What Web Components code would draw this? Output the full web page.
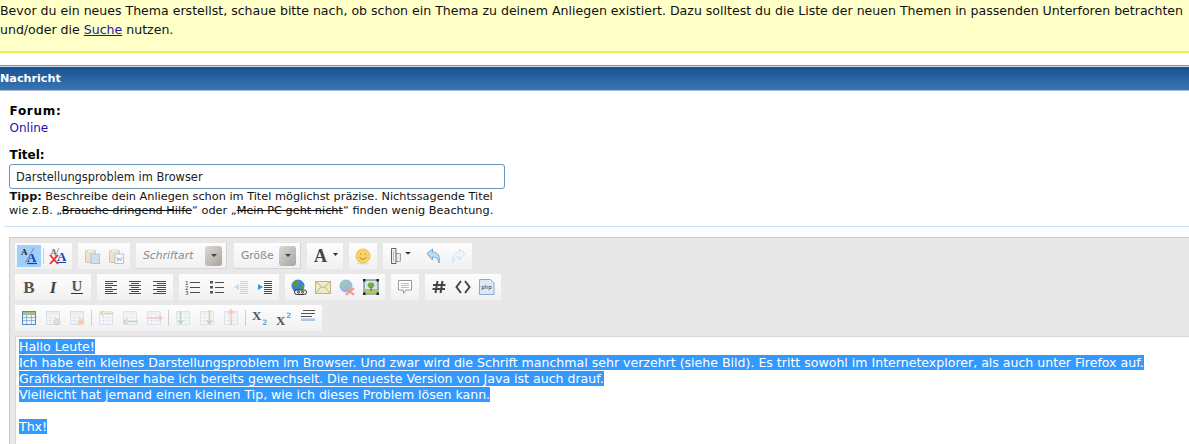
<!DOCTYPE html>
<html lang="de"><head><meta charset="utf-8"><title>Nachricht</title>
<style>
html,body{margin:0;padding:0;background:#fff;overflow:hidden}
body{font:11.5px "DejaVu Sans",Verdana,sans-serif;color:#000;width:1189px;height:444px}
</style></head><body>
<x-notice>Bevor du ein neues Thema erstellst, schaue bitte nach, ob schon ein Thema zu deinem Anliegen existiert. Dazu solltest du die Liste der neuen Themen in passenden Unterforen betrachten<br>und/oder die <a href="#" style="color:#1a1aa6">Suche</a> nutzen.</x-notice>
<x-section-head>Nachricht</x-section-head>
<x-field label="Forum:" style="margin-top:12px"><span style="color:#2a0fa8">Online</span></x-field>
<x-title-field value="Darstellungsproblem im Browser"></x-title-field>
<x-rule></x-rule>
<x-editor>
  <x-tb-row>
    <x-tb-group><x-tb-btn icon="aa" on></x-tb-btn><x-tb-sep></x-tb-sep><x-tb-btn icon="aax"></x-tb-btn></x-tb-group>
    <x-tb-group><x-tb-btn icon="paste" dim></x-tb-btn><x-tb-btn icon="pasteword" dim></x-tb-btn></x-tb-group>
    <x-combo w="91" style="margin-right:1px">Schriftart</x-combo>
    <x-combo w="67">Größe</x-combo>
    <x-tb-group><x-tb-btn icon="color" w="32"></x-tb-btn></x-tb-group>
    <x-tb-group><x-tb-btn icon="smile"></x-tb-btn></x-tb-group>
    <x-tb-group><x-tb-btn icon="mug" w="37"></x-tb-btn><x-tb-btn icon="undo"></x-tb-btn><x-tb-btn icon="redo"></x-tb-btn></x-tb-group>
  </x-tb-row>
  <x-tb-row>
    <x-tb-group><x-tb-btn icon="b"></x-tb-btn><x-tb-btn icon="i"></x-tb-btn><x-tb-btn icon="u"></x-tb-btn></x-tb-group>
    <x-tb-group><x-tb-btn icon="al"></x-tb-btn><x-tb-btn icon="ac"></x-tb-btn><x-tb-btn icon="ar"></x-tb-btn></x-tb-group>
    <x-tb-group><x-tb-btn icon="ol"></x-tb-btn><x-tb-btn icon="ul"></x-tb-btn><x-tb-btn icon="outdent" dim></x-tb-btn><x-tb-btn icon="indent"></x-tb-btn></x-tb-group>
    <x-tb-group><x-tb-btn icon="link"></x-tb-btn><x-tb-btn icon="mail"></x-tb-btn><x-tb-btn icon="unlink" dim></x-tb-btn><x-tb-btn icon="image"></x-tb-btn></x-tb-group>
    <x-tb-group><x-tb-btn icon="quote"></x-tb-btn></x-tb-group>
    <x-tb-group><x-tb-btn icon="hash"></x-tb-btn><x-tb-btn icon="code"></x-tb-btn><x-tb-btn icon="php"></x-tb-btn></x-tb-group>
  </x-tb-row>
  <x-tb-row>
    <x-tb-group>
      <x-tb-btn icon="table"></x-tb-btn><x-tb-btn icon="tprops" dim></x-tb-btn><x-tb-btn icon="tdel" dim></x-tb-btn><x-tb-sep></x-tb-sep>
      <x-tb-btn icon="r1" dim></x-tb-btn><x-tb-btn icon="r2" dim></x-tb-btn><x-tb-btn icon="r3" dim></x-tb-btn><x-tb-sep></x-tb-sep>
      <x-tb-btn icon="c1" dim></x-tb-btn><x-tb-btn icon="c2" dim></x-tb-btn><x-tb-btn icon="c3" dim></x-tb-btn><x-tb-sep></x-tb-sep>
      <x-tb-btn icon="sub"></x-tb-btn><x-tb-btn icon="sup"></x-tb-btn><x-tb-btn icon="hr"></x-tb-btn>
    </x-tb-group>
  </x-tb-row>
  <x-edit-area>
    <span>Hallo Leute!</span><br>
    <span>Ich habe ein kleines Darstellungsproblem im Browser. Und zwar wird die Schrift manchmal sehr verzehrt (siehe Bild). Es tritt sowohl im Internetexplorer, als auch unter Firefox auf.</span><br>
    <span>Grafikkartentreiber habe ich bereits gewechselt. Die neueste Version von Java ist auch drauf.</span><br>
    <span>Vielleicht hat jemand einen kleinen Tip, wie ich dieses Problem lösen kann.</span><br>
    <br>
    <span>Thx!</span>
  </x-edit-area>
</x-editor>
<script>
function def(name, html, extra){
  customElements.define(name, class extends HTMLElement{
    constructor(){super();this.attachShadow({mode:'open'}).innerHTML=html;}
    connectedCallback(){extra&&extra.call(this);}
  });
}
def('x-notice',`<style>:host{display:block;box-sizing:border-box;height:53px;background:#ffffc8;border-bottom:2px solid #eeee55;line-height:19px;color:#111;font-size:12.55px;padding-top:.5px}</style><slot></slot>`);
def('x-section-head',`<style>:host{display:block;box-sizing:border-box;margin-top:12px;height:26px;border-top:1px solid #7f93b5;border-bottom:1px solid #a9b9da;box-shadow:inset 0 1px 0 #d5dbe6;background:linear-gradient(#15528f,#3a74b4);color:#fff;font-weight:bold;font-size:11.2px;line-height:26px}</style><slot></slot>`);
def('x-field',`<style>:host{display:block;padding-left:9.5px;line-height:17px;font-size:12px}b{display:block;letter-spacing:.7px}</style><b></b><slot></slot>`,function(){this.shadowRoot.querySelector('b').textContent=this.getAttribute('label')});
def('x-title-field',`<style>:host{display:block;padding-left:9px;margin-top:11px}
b{display:block;font-size:12px;line-height:15px;padding-left:.5px}
.i{box-sizing:border-box;width:496px;height:25px;border:1px solid #6c93b8;border-radius:3px;margin-top:1px;padding-left:6px;line-height:24px;font-size:11.4px;color:#222}
p{margin:0;font-size:11.3px;line-height:14px;width:500px;color:#111}
s{text-decoration:line-through}</style>
<b>Titel:</b><div class="i"></div>
<p><b style="display:inline;font-size:11.3px">Tipp:</b> Beschreibe dein Anliegen schon im Titel möglichst präzise. Nichtssagende Titel<br>wie z.B. „<s>Brauche dringend Hilfe</s>“ oder „<s>Mein PC geht nicht</s>“ finden wenig Beachtung.</p>`,function(){this.shadowRoot.querySelector('.i').textContent=this.getAttribute('value')});
def('x-rule',`<style>:host{display:block;height:1px;background:#cfe0ee;margin:8px 0 10px 4px}</style>`);
def('x-editor',`<style>:host{display:block;box-sizing:border-box;margin-left:9px;height:220px;border:1px solid #ccc;border-right:0;background:#e8e8e8;padding:5px 0 0 5px}</style><slot></slot>`);
def('x-tb-row',`<style>:host{display:flex;gap:6px;height:26px;margin-bottom:5px}</style><slot></slot>`);
def('x-tb-group',`<style>:host{display:flex;align-items:center;padding:2px;background:linear-gradient(#fdfdfd,#f1f1f1);box-sizing:border-box;height:26px}</style><slot></slot>`);
def('x-tb-sep',`<style>:host{display:block;width:1px;height:16px;background:#cfcfcf;margin:0 2px}</style>`);
def('x-combo',`<style>:host{display:flex;box-sizing:border-box;height:26px;background:linear-gradient(#fdfdfd,#f1f1f1);border-right:1px solid #d5d5d5;border-bottom:1px solid #d5d5d5;align-items:center;justify-content:space-between;padding:0 4px 0 7px;font:italic 10.8px "DejaVu Sans",sans-serif;color:#8a8a8a}
i{display:flex;flex:none;align-items:center;justify-content:center;width:17px;height:20px;border-radius:3px;background:linear-gradient(135deg,#dcd8d4,#a8a4a0)}
i::after{content:"";width:0;height:0;border:3.5px solid transparent;border-top:3px solid #444;border-bottom:0}</style><span><slot></slot></span><i></i>`,function(){this.style.width=this.getAttribute('w')+'px';if(this.textContent.startsWith('Gr'))this.style.fontStyle='normal';});

const L='#4a4a4a';
const bars=(ys,x1s,x2s,c=L)=>ys.map((y,i)=>`<path d="M${x1s[i%x1s.length]} ${y}.5H${x2s[i%x2s.length]}" stroke="${c}"/>`).join('');
const tbl=(c='#5f86c0',fill='#eef3fb',head='#9fc28f')=>`<rect x="1.5" y="1.5" width="13" height="13" fill="${fill}" stroke="${c}"/><rect x="2" y="2" width="12" height="3" fill="${head}"/><path d="M2 7.5H14M2 10.5H14M5.5 5V14M10.5 5V14" stroke="${c}" stroke-opacity=".55"/>`;
const P=['#c4d2e4','#f6f8fb','#e4ecdc'];
const globe=`<circle cx="7" cy="7" r="6.5" fill="#3f7fd4"/><path d="M3 2.500c2-1.500 5-1.500 6 0-1 2-2 2-2 4s-2 2-3 1-2-2-1-5zM10 6c2-.5 3 0 3 2s-2 3-3 3-1-3 0-5z" fill="#4f9f4f"/>`;
const ICONS={
aa:`<text x="0" y="7" font-family="Liberation Serif" font-weight="bold" font-size="9" fill="#222">A</text><path d="M13 0 4 15" stroke="#8a8a8a"/><text x="6" y="14" font-family="Liberation Serif" font-weight="bold" font-size="13" fill="#1a3fb0">A</text><path d="M6 15.500H16" stroke="#1a3fb0" stroke-width="1.200"/>`,
aax:`<text x="0" y="8" font-family="Liberation Serif" font-weight="bold" font-size="10" fill="#777">A</text><path d="M9 0 3 14" stroke="#aaa"/><text x="7" y="13" font-family="Liberation Serif" font-weight="bold" font-size="13" fill="#1a3fb0">A</text><path d="M7 14.500H16" stroke="#1a3fb0"/><path d="M0 7 8 16M8 7 0 16" stroke="#e83030" stroke-width="1.800"/>`,
paste:`<rect x="1.500" y="2.500" width="10" height="12" rx="1" fill="#e8c8a0" stroke="#b09070"/><rect x="4" y="1" width="5" height="3" fill="#ddd"/><rect x="7" y="6" width="8.500" height="9.500" fill="#a8cce8" stroke="#6898c0"/>`,
pasteword:`<rect x="1.500" y="2.500" width="10" height="12" rx="1" fill="#e8c8a0" stroke="#b09070"/><rect x="4" y="1" width="5" height="3" fill="#ddd"/><rect x="7" y="6" width="8.500" height="9.500" fill="#fff" stroke="#8090b0"/><path d="M9 9l1 4 1.500-3 1 3 1.500-4" fill="none" stroke="#5070c0"/>`,
color:`<text x="0" y="14" font-family="Liberation Serif" font-weight="bold" font-size="18" fill="#444">A</text><path d="M19 5h5l-2.500 3z" fill="#333"/>`,
smile:`<ellipse cx="8" cy="15.500" rx="6" ry="1" fill="#ddd"/><circle cx="8" cy="8" r="7" fill="#f8d468" stroke="#eec050"/><path d="M4.500 9.500Q8 13 11.500 9.500" fill="none" stroke="#b8862a"/><circle cx="5.500" cy="6" r=".8" fill="#c89a30"/><circle cx="10.500" cy="6" r=".8" fill="#c89a30"/>`,
mug:`<path d="M5.500 5.500h5v8h-5z" fill="#e4e8ec" stroke="#9aa"/><path d="M1.500 .5h4.500v15H1.500z" fill="#eee" stroke="#666"/><path d="M3.500 3v10" stroke="#bbb"/><path d="M15 4h6l-3 2.500z" fill="#333"/>`,
undo:`<path d="M1 5.500 6.500 1v3c5 0 8 4 6.500 11-1-4-3-6-6.500-6v3z" fill="#bcdcf4" stroke="#6aa8dc"/>`,
redo:`<path d="M15 5.500 9.500 1v3c-5 0-8 4-6.500 11 1-4 3-6 6.500-6v3z" fill="#eef5fb" stroke="#cfe2f2"/>`,
b:`<text x="8" y="14" text-anchor="middle" font-family="Liberation Serif" font-weight="bold" font-size="17" fill="#555">B</text>`,
i:`<text x="8" y="14" text-anchor="middle" font-family="Liberation Serif" font-weight="bold" font-style="italic" font-size="17" fill="#444">I</text>`,
u:`<text x="8" y="12" text-anchor="middle" font-family="Liberation Serif" font-weight="bold" font-size="15" fill="#555">U</text><path d="M2 14.500H14" stroke="#333"/>`,
al:bars([2,4,6,8,10,12,14],[2],[14,10,14,9,14,10,14]),
ac:bars([2,4,6,8,10,12,14],[2,4],[14,12]),
ar:bars([2,4,6,8,10,12,14],[2,6],[15]),
ol:`<text x="0" y="6" font-family="DejaVu Sans" font-size="5.500" fill="#333">1</text><text x="0" y="11" font-family="DejaVu Sans" font-size="5.500" fill="#333">2</text><text x="0" y="16" font-family="DejaVu Sans" font-size="5.500" fill="#333">3</text>`+bars([3,8,13],[5],[15]),
ul:`<rect x="1" y="2" width="3" height="2.500" fill="#556"/><rect x="1" y="7" width="3" height="2.500" fill="#556"/><rect x="1" y="12" width="3" height="2.500" fill="#556"/>`+bars([3,8,13],[6],[15]),
outdent:bars([2,4,6,8,10,12,14],[7],[15],'#aaa')+`<path d="M1 8l5-3v6z" fill="#8cc4ee"/>`,
indent:bars([2,4,6,8,10,12,14],[7],[15])+`<path d="M6 8 1 5v6z" fill="#3a9ad8"/>`,
link:globe+`<rect x="3.500" y="11" width="12" height="4.500" rx="2.200" fill="#eee" stroke="#333"/><circle cx="7.500" cy="13.200" r="1" fill="none" stroke="#333"/><circle cx="11.500" cy="13.200" r="1" fill="none" stroke="#333"/>`,
mail:`<rect x=".5" y="2.500" width="15" height="12" fill="#efecc0" stroke="#b8b48c"/><path d="M1 3 8 9l7-6M1 14l5-6M15 14l-5-6" fill="none" stroke="#b8b48c"/>`,
unlink:globe+`<path d="M7 9l8 7M15 9l-8 7" stroke="#e84040" stroke-width="2.200"/>`,
image:`<rect x="1" y="1" width="14" height="14" fill="#cfe8f2" stroke="#666"/><rect x="1.500" y="10" width="13" height="4.500" fill="#a8c860"/><path d="M8 3.500c3 0 4 2 3 4s-5 2-6 0 0-4 3-4z" fill="#7aa840"/><rect x="7.400" y="8" width="1.300" height="4" fill="#806040"/><path d="M0 0h2.500v2.500H0zM13.500 0H16v2.500h-2.500zM0 13.500h2.500V16H0zM13.500 13.500H16V16h-2.500z" fill="#222"/>`,
quote:`<path d="M1.500 1.500h13v9.500H9L6.500 14.500V11h-5z" fill="#fff" stroke="#999"/><path d="M4 4.500h8M4 6.500h8M4 8.500h8" stroke="#bbb"/>`,
hash:`<path d="M6.500 2 4.500 14M11.500 2 9.500 14M2 6h12.500M1.500 10H14" stroke="#444" stroke-width="2" fill="none"/>`,
code:`<path d="M6 2 1.500 8 6 14M10 2l4.500 6L10 14" fill="none" stroke="#444" stroke-width="2"/>`,
php:`<path d="M.5 .5h11l3.500 3.500v11.500H.5z" fill="#dce8f8" stroke="#8aa8d0"/><text x="7.500" y="10" text-anchor="middle" font-family="DejaVu Sans" font-size="5.500" fill="#334">php</text>`,
table:tbl(),
tprops:tbl('#b8c8e0','#f4f6fa','#dfe6d8')+`<circle cx="12" cy="12" r="3" fill="#ccc" stroke="#aaa"/>`,
tdel:tbl('#b8c8e0','#f4f6fa','#dfe6d8')+`<circle cx="12" cy="12" r="3.500" fill="#f0b890"/><path d="M10 12h4" stroke="#c87850"/>`,
r1:tbl(...P)+`<path d="M6 3.500h10M6 1l-3 2.500L6 6" fill="none" stroke="#98c480" stroke-width="1.600"/>`,
r2:tbl(...P)+`<path d="M5 11.500h11M5 9l-3 2.500L5 14" fill="none" stroke="#88bc70" stroke-width="1.600"/>`,
r3:tbl(...P)+`<path d="M1 8h15M13 5.500 16 8l-3 2.500" fill="none" stroke="#f09898" stroke-width="1.600"/>`,
c1:tbl(...P)+`<path d="M5.500 1v12M3 10.500l2.500 3 2.500-3" fill="none" stroke="#88bc70" stroke-width="1.600"/>`,
c2:tbl(...P)+`<path d="M10.500 0v13M8 10.500l2.500 3 2.500-3" fill="none" stroke="#88bc70" stroke-width="1.600"/>`,
c3:tbl(...P)+`<path d="M8 15V1M5.500 3.500 8 0l2.500 3.500" fill="none" stroke="#f09898" stroke-width="1.600"/>`,
sub:`<text x="0" y="10" font-family="Liberation Serif" font-weight="bold" font-size="13" fill="#555">X</text><text x="10" y="15" font-family="DejaVu Sans" font-size="7.500" font-weight="bold" fill="#78a8e0">2</text>`,
sup:`<text x="0" y="15" font-family="Liberation Serif" font-weight="bold" font-size="13" fill="#555">X</text><text x="10" y="8" font-family="DejaVu Sans" font-size="7.500" font-weight="bold" fill="#78a8e0">2</text>`,
hr:`<path d="M3 .5H15M1 3.500H15M1 6.500H12" stroke="#555"/><rect x="1" y="8.500" width="14" height="2.500" fill="#a8c8ec"/>`
};
def('x-tb-btn',`<style>:host{display:flex;align-items:center;justify-content:center;width:24px;height:22px;box-sizing:border-box;flex:none}
:host([on]){background:#9fd0fb}
:host([dim]) svg{opacity:.5}
svg{display:block;overflow:visible}</style><svg width="16" height="16" viewBox="0 0 16 16"></svg>`,function(){
  const s=this.shadowRoot.querySelector('svg');s.innerHTML=ICONS[this.getAttribute('icon')]||'';
  if(this.getAttribute('w')){this.style.width=this.getAttribute('w')+'px';this.style.justifyContent='flex-start';this.style.paddingLeft='5px';}
});
def('x-edit-area',`<style>:host{display:block;box-sizing:border-box;border-top:1px solid #d8d8d8;border-left:1px solid #d8d8d8;background:#fff;height:110px;padding:2px 0 0 3px;font-size:12.55px;line-height:16px;color:#fff;white-space:nowrap}
::slotted(span){background:#3399ff}</style><slot></slot>`);
</script>
</body></html>
